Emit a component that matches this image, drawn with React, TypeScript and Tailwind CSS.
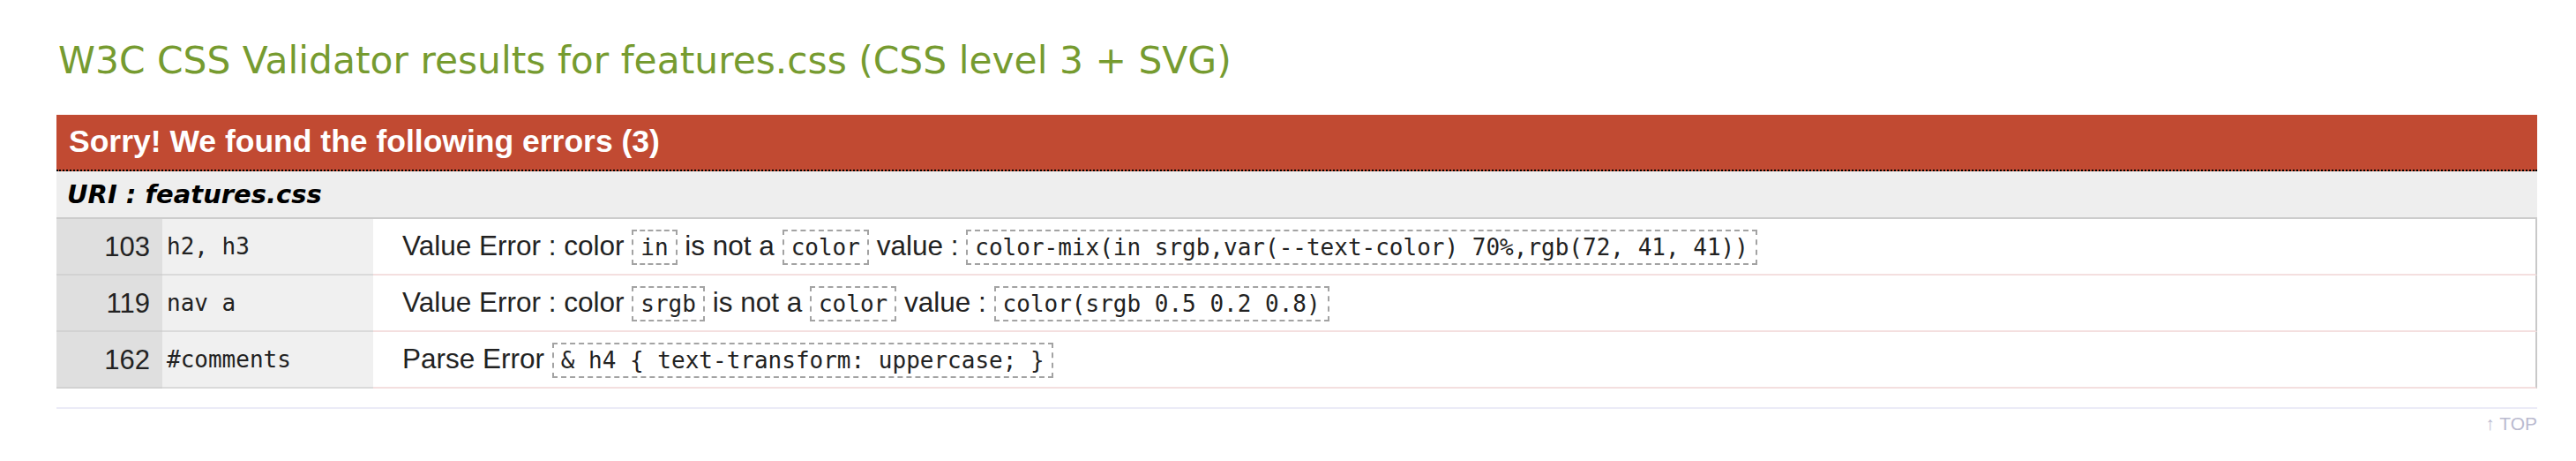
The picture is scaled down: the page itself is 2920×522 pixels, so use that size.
import type { ReactNode } from "react";

type ValidationError = {
  line: number;
  context: string;
  message: ReactNode;
};

function Code({ children }: { children: ReactNode }) {
  return (
    <span className="inline-block whitespace-pre border-2 border-dashed border-[#a3a3a3] px-[8px] py-[3px] align-middle font-['DejaVu_Sans_Mono',Menlo,monospace] text-[26px] leading-[30px] text-[#222]">
      {children}
    </span>
  );
}

const errors: ValidationError[] = [
  {
    line: 103,
    context: "h2, h3",
    message: (
      <>
        Value Error : color <Code>in</Code> is not a <Code>color</Code> value :{" "}
        <Code>color-mix(in srgb,var(--text-color) 70%,rgb(72, 41, 41))</Code>
      </>
    ),
  },
  {
    line: 119,
    context: "nav a",
    message: (
      <>
        Value Error : color <Code>srgb</Code> is not a <Code>color</Code> value :{" "}
        <Code>color(srgb 0.5 0.2 0.8)</Code>
      </>
    ),
  },
  {
    line: 162,
    context: "#comments",
    message: (
      <>
        Parse Error <Code>{"& h4 { text-transform: uppercase; }"}</Code>
      </>
    ),
  },
];

export default function App() {
  return (
    <div className="min-h-[522px] bg-white pl-[64px] pr-[44px] pt-[44px] font-['Liberation_Sans',Arial,sans-serif] text-[#222]">
      <h2 className="pl-[2px] font-['DejaVu_Sans',Verdana,sans-serif] text-[42.4px] font-normal leading-[49px] text-[#769b30]">
        W3C CSS Validator results for features.css (CSS level 3 + SVG)
      </h2>

      <div className="mt-[37px]">
        <div className="flex h-[64px] items-center border-b-2 border-dotted border-b-black bg-[#c14a32] pl-[14px]">
          <h3 className="text-[35.5px] font-bold leading-none text-white">
            Sorry! We found the following errors (3)
          </h3>
        </div>

        <div className="flex h-[54px] items-center border-b-2 border-b-[#cccccc] bg-[#eeeeee] pl-[12px]">
          <h4 className="font-['DejaVu_Sans',Verdana,sans-serif] text-[29px] font-bold italic leading-none text-black">
            URI : features.css
          </h4>
        </div>

        {errors.map((error) => (
          <div key={error.line} className="flex h-[64px]">
            <div className="flex w-[120px] shrink-0 items-center justify-end border-b-2 border-b-[#d2d2d2] bg-[#dfdfdf] pr-[14px] text-[31px] leading-none">
              {error.line}
            </div>
            <div className="flex w-[239px] shrink-0 items-center border-b-2 border-b-[#dadada] bg-[#f0f0f0] pl-[5px] font-['DejaVu_Sans_Mono',Menlo,monospace] text-[26px] leading-none">
              {error.context}
            </div>
            <div className="flex flex-1 items-center border-b-2 border-r-2 border-b-[#f4dfdf] border-r-[#c9c9c9] bg-white pl-[33px] text-[31.5px] leading-[40px]">
              <div>{error.message}</div>
            </div>
          </div>
        ))}
      </div>

      <div className="mt-[21px] border-t-2 border-t-[#ebebf7]" />
      <div className="mt-[4px] text-right text-[21px] leading-[26px] text-[#babacf]">
        ↑ TOP
      </div>
    </div>
  );
}
